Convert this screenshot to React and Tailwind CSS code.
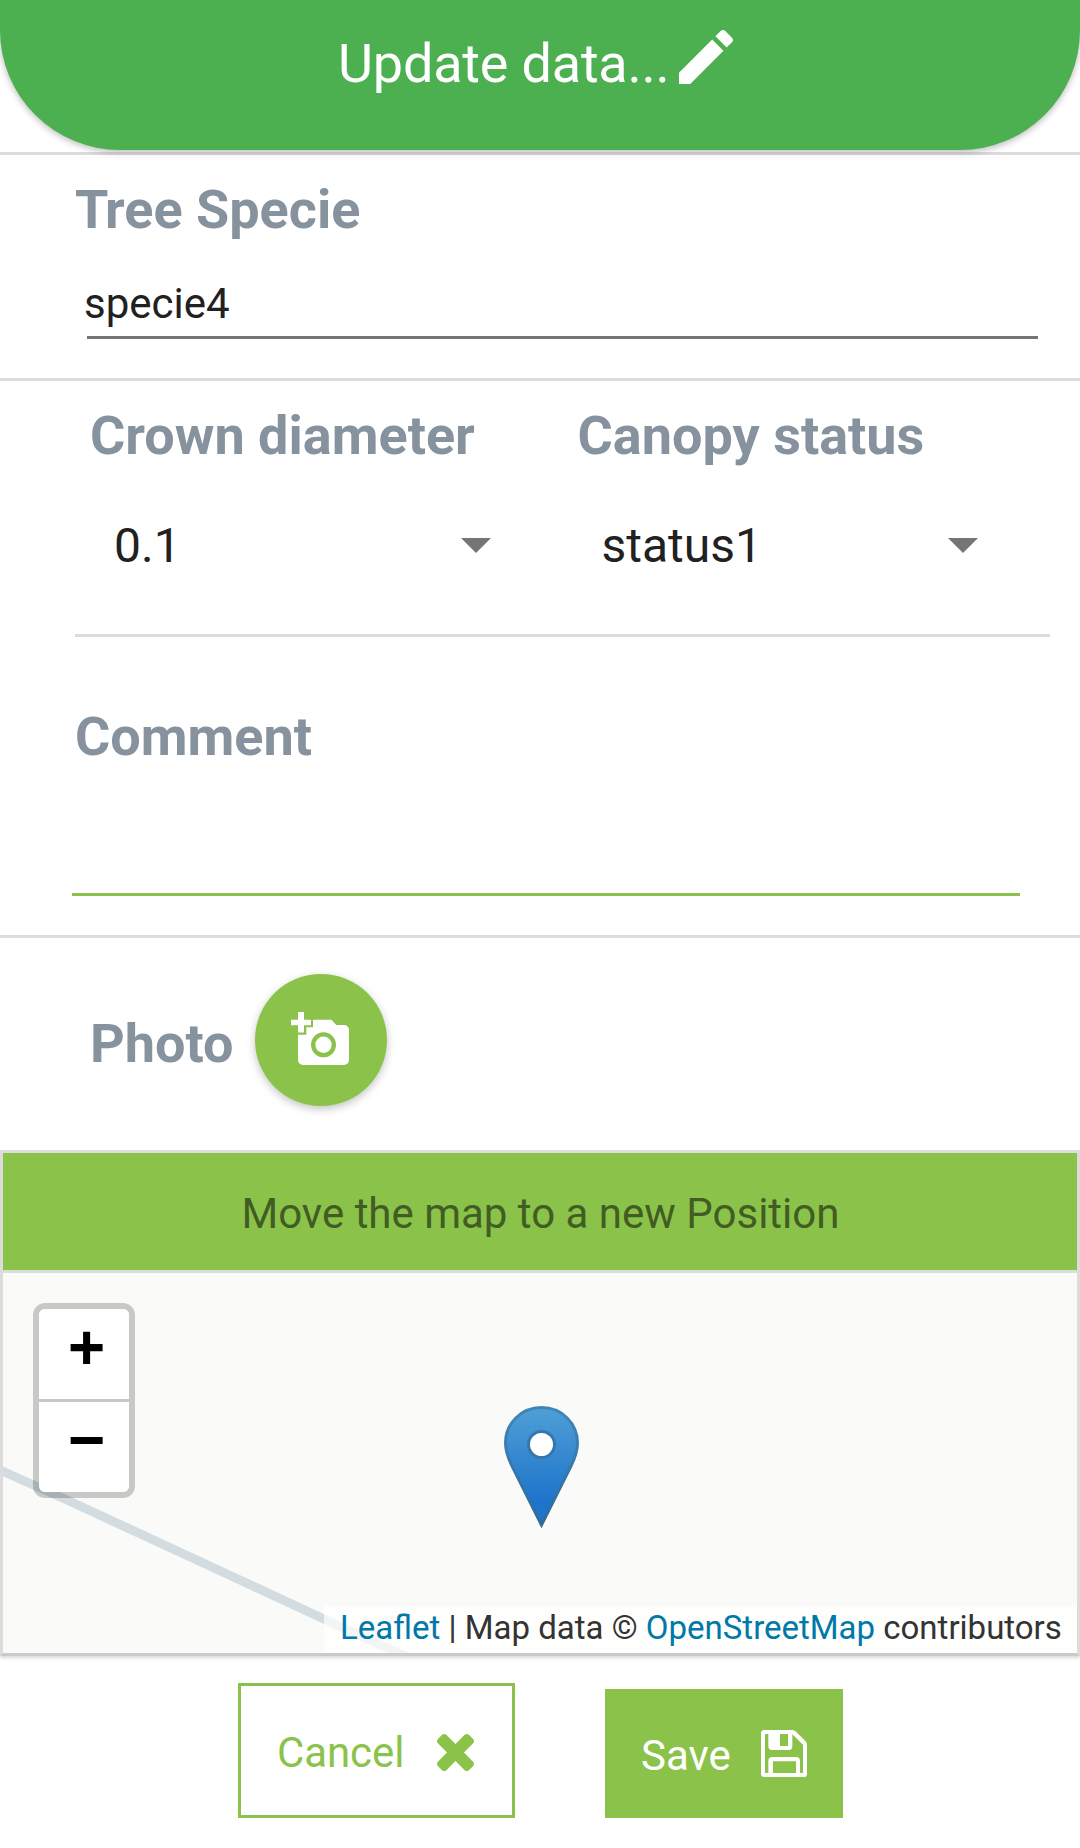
import React from "react";

function Label({ children, className = "" }) {
  return (
    <div className={`text-[54px] leading-[64px] font-bold whitespace-nowrap text-[#86939e] ${className}`}>
      {children}
    </div>
  );
}

function Select({ label, value }) {
  return (
    <div className="w-[487.5px] shrink-0">
      <Label>{label}</Label>
      <div className="mt-12 flex h-[60px] items-center justify-between pr-[87px] pl-6">
        <span className="text-[48px] leading-[60px] text-[#212121]">{value}</span>
        <svg className="mb-[2px] h-[15px] w-[30px]" viewBox="0 0 30 15">
          <path d="M0 0h30L15 15z" fill="#757575" />
        </svg>
      </div>
    </div>
  );
}

function CameraPlus() {
  return (
    <svg className="h-[53px] w-[58px]" viewBox="0 0 58 53" fill="#fff">
      <path d="M7 0h6v7.7h7v5.6h-7V20.500H7v-7.200H0V7.700h7z" />
      <path
        fillRule="evenodd"
        d="M22 7.700h18.300l5 5.300H53a5 5 0 0 1 5 5v30a5 5 0 0 1-5 5H12a5 5 0 0 1-5-5V22.700h8.300v-7.500H22zM32.500 20.300a12.500 12.500 0 1 0 0 25a12.500 12.500 0 1 0 0-25z"
      />
      <circle cx="32.500" cy="32.800" r="8.200" />
    </svg>
  );
}

function Marker() {
  return (
    <svg className="h-[123px] w-[75px]" viewBox="0 0 75 123">
      <defs>
        <linearGradient id="pin" x1="0" y1="0" x2="0" y2="1">
          <stop offset="0" stopColor="#4f9fd6" />
          <stop offset="0.800" stopColor="#1d74cb" />
          <stop offset="1" stopColor="#1d74cb" />
        </linearGradient>
        <linearGradient id="rim" x1="0" y1="0" x2="0" y2="1">
          <stop offset="0" stopColor="#3f86b8" />
          <stop offset="1" stopColor="#2f6c9c" />
        </linearGradient>
      </defs>
      <path
        d="M37.500 2.500C17 2.500 1.500 18.500 1.500 38c0 9 3 16 6.500 23L37.500 120 67 61c3.500-7 6.500-14 6.500-23C73.500 18.500 58 2.500 37.500 2.500z"
        fill="url(#pin)"
        stroke="url(#rim)"
        strokeWidth="3"
      />
      <circle cx="37.500" cy="39.500" r="13" fill="#fff" stroke="#3577ac" strokeWidth="3" />
    </svg>
  );
}

export default function App() {
  return (
    <div className="h-[1848px] w-[1080px] overflow-hidden bg-white font-[Roboto,sans-serif]">
      <header className="relative z-10 flex h-[150px] rounded-b-[120px] bg-[#4caf50] pl-[338px] text-white shadow-[0_2px_7px_rgba(0,0,0,0.280)]">
        <span className="mt-[32px] w-[332px] text-[54px] leading-[64px] tracking-[-0.2px] whitespace-nowrap">Update data...</span>
        <svg className="mt-[21px] size-[72px]" viewBox="0 0 24 24" fill="currentColor">
          <path d="M3 17.250V21h3.750L17.810 9.940l-3.750-3.750L3 17.250zM20.710 7.040c.390-.390.390-1.020 0-1.410l-2.340-2.340c-.390-.390-1.020-.390-1.410 0l-1.830 1.830 3.750 3.750 1.830-1.830z" />
        </svg>
      </header>

      <section className="mt-[2px] h-[226px] border-t-[3px] border-[#dcdcdc] pt-[23px]">
        <Label className="pl-[75px]">
          <span className="tracking-[-3.5px]">T</span>ree Specie
        </Label>
        <div className="mt-[37px] ml-[87px] h-[60px] w-[951px] border-b-[3px] border-[#757575]">
          <span className="-ml-[3px] text-[42px] leading-[50px] text-[#212121]">specie4</span>
        </div>
      </section>

      <section className="h-[557px] border-t-[3px] border-[#dcdcdc] pt-[23px]">
        <div className="ml-[75px] flex h-[233px] w-[975px] border-b-[3px] border-[#dcdcdc] pl-[15px]">
          <Select label="Crown diameter" value="0.1" />
          <Select label="Canopy status" value="status1" />
        </div>
        <Label className="mt-[68px] pl-[75px]">Comment</Label>
        <div className="ml-[72px] h-[127px] w-[948px] border-b-[3px] border-[#8bc34a]" />
      </section>

      <section className="flex h-[215px] border-t-[3px] border-[#dcdcdc] pl-[90px]">
        <Label className="mt-[74px] w-[165px]">Photo</Label>
        <button className="mt-9 flex size-[132px] items-start rounded-full bg-[#8bc34a] pt-[38px] pl-9 shadow-[0_3px_8px_rgba(0,0,0,0.240)]">
          <CameraPlus />
        </button>
      </section>

      <section className="h-[506px] border-[3px] border-[#dcdcdc] border-b-[#cacaca] bg-[#fafaf8] shadow-[0_2px_3px_rgba(0,0,0,0.150)]">
        <div className="h-[120px] border-b-[3px] border-[#dcdcdc] bg-[#8bc34a] pt-1 pl-px text-center text-[42px] leading-[113px] text-[#425d24]">
          Move the map to a new Position
        </div>
        <div className="relative h-[380px] overflow-hidden">
          <svg className="absolute inset-0 h-[380px] w-[1074px]" viewBox="3 1273 1074 380">
            <path d="M-10 1465.500L67 1500L240 1580L324 1619L420 1663" fill="none" stroke="#d3dce0" strokeWidth="9" />
          </svg>
          <div className="absolute top-[30px] left-[30px] w-[102px] rounded-xl border-[6px] border-black/20 bg-clip-padding font-['Open_Sans',sans-serif] text-[66px] font-bold text-black">
            <div className="h-[93px] rounded-t-md border-b-[3px] border-[#c8c8c8] bg-white pl-[5px] text-center leading-[72px]">+</div>
            <div className="h-[90px] rounded-b-md bg-white pl-[5px] text-center leading-[72px]">−</div>
          </div>
          <div className="absolute top-[132px] left-[501px]">
            <Marker />
          </div>
          <div className="absolute right-0 bottom-0 flex h-[47px] w-[753px] bg-white/70 pl-4 text-[33px] leading-[44px] whitespace-pre text-[#333]">
            <span className="text-[#0078a8]">Leaflet</span>
            <span> | Map data © </span>
            <span className="text-[#0078a8]">OpenStreetMap</span>
            <span> contributors</span>
          </div>
        </div>
      </section>

      <div className="flex items-end pt-[27px] pl-[238px] text-[42px] leading-[50px]">
        <button className="flex h-[135px] w-[277px] border-[3px] border-[#8bc34a] pl-[36px] text-[#8bc34a]">
          <span className="mt-[42px] w-[160px] text-left tracking-[-0.1px]">Cancel</span>
          <svg className="mt-12 size-[37px]" viewBox="302 366 1188 1188" fill="currentColor">
            <path d="M1490 1322q0 40-28 68l-136 136q-28 28-68 28t-68-28l-294-294-294 294q-28 28-68 28t-68-28l-136-136q-28-28-28-68t28-68l294-294-294-294q-28-28-28-68t28-68l136-136q28-28 68-28t68 28l294 294 294-294q28-28 68-28t68 28l136 136q28 28 28 68t-28 68l-294 294 294 294q28 28 28 68z" />
          </svg>
        </button>
        <button className="ml-[90px] flex h-[129px] w-[238px] bg-[#8bc34a] pl-9 text-white">
          <span className="mt-[42px] w-[120px] text-left">Save</span>
          <svg className="mt-[41px] h-[47px] w-[46px]" viewBox="0 0 138 141" fill="#fff" fillRule="evenodd">
            <path d="M10 0H94Q100 0 105 5L133 33Q138 38 138 44V131Q138 141 128 141H10Q0 141 0 131V10Q0 0 10 0zM12 12V129H22V93Q22 81 34 81H105Q117 81 117 93V129H126V44L94 13V49Q94 60 83 60H33Q22 60 22 49V12zM57 12V48H81V12zM36 94V129H105V94z" />
          </svg>
        </button>
      </div>
    </div>
  );
}
